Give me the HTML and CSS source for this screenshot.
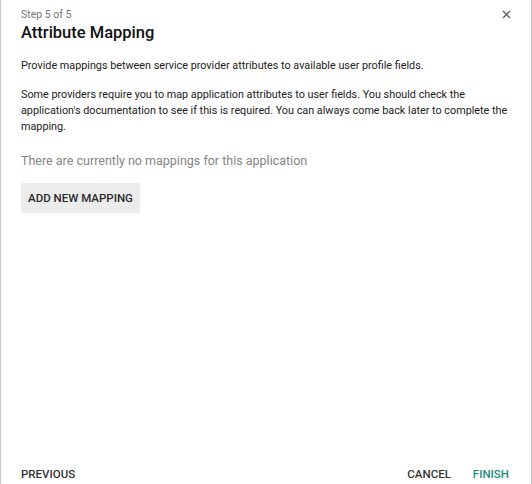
FILE: index.html
```html
<!DOCTYPE html>
<html>
<head>
<meta charset="utf-8">
<link rel="stylesheet" href="styles.css">
</head>
<body>
<div class="dialog">
  <div class="content">
    <div class="header">
      <div>
        <div class="step">Step 5 of 5</div>
        <h1 class="title">Attribute Mapping</h1>
      </div>
      <button class="close" aria-label="Close">
        <svg width="9" height="9" viewBox="0 0 9 9"><path d="M1 1L8 8M8 1L1 8" stroke="#666" stroke-width="1.5" fill="none"/></svg>
      </button>
    </div>
    <p class="text first">Provide mappings between service provider attributes to available user profile fields.</p>
    <p class="text">Some providers require you to map application attributes to user fields. You should check the application's documentation to see if this is required. You can always come back later to complete the mapping.</p>
    <p class="empty">There are currently no mappings for this application</p>
    <button class="add">ADD NEW MAPPING</button>
  </div>
  <div class="footer">
    <button class="btn">PREVIOUS</button>
    <div class="right">
      <button class="btn">CANCEL</button>
      <button class="btn primary">FINISH</button>
    </div>
  </div>
</div>
</body>
</html>
```
FILE: styles.css
```css
html, body { margin: 0; padding: 0; }
body { font-family: Roboto, "Noto Sans", sans-serif; color: #212121; background: #fff; }
.dialog {
  width: 532px; height: 484px; box-sizing: border-box;
  border-left: 1px solid #c8c8c8; border-right: 1px solid #c8c8c8;
  display: flex; flex-direction: column; justify-content: space-between;
}
.content { padding: 8px 19px 0 20px; }
.header { display: flex; justify-content: space-between; align-items: flex-start; }
.step { font-size: 10.5px; color: #757575; line-height: 14px; }
.title { font-size: 16.5px; font-weight: 500; margin: 0; line-height: 22px; color: #111; }
.close { border: 0; background: none; padding: 0; width: 9px; height: 9px; margin-top: 2px; margin-right: 1px; display: flex; }
.text { font-size: 10.8px; line-height: 16px; margin: 13px 0 0 0; color: #212121; }
.text.first { margin-top: 14px; }
.empty { font-size: 12.5px; color: #858585; margin: 17px 0 0 0; line-height: 18px; }
.add {
  margin-top: 13px; border: 0; background: #ececec; font-family: inherit;
  font-size: 11.5px; font-weight: 500; color: #2a2a2a; height: 30px; padding: 0 7px; width: 119px;
}
.footer { display: flex; justify-content: space-between; align-items: center; padding: 0 22px 0 20px; height: 20px; }
.right { display: flex; gap: 22px; }
.btn { border: 0; background: none; padding: 0; font-family: inherit; font-size: 11.5px; font-weight: 500; color: #333; }
.primary { color: #1e8c7e; }
```
